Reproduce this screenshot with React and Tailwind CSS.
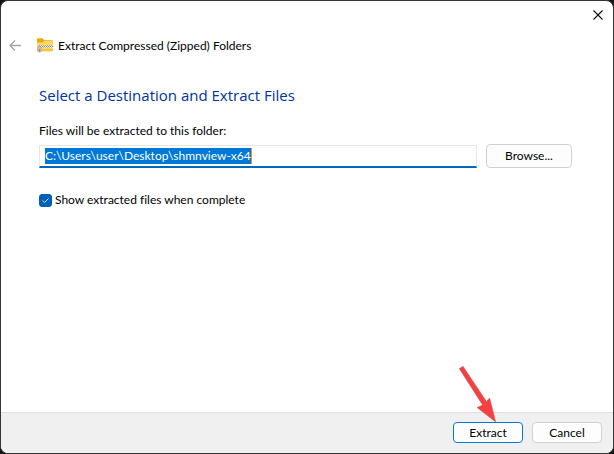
import { useState } from 'react'

const BTN = 'rounded border bg-[#fdfdfd] text-center leading-4 hover:bg-[#e5f1fb]'

function ZipFolderIcon() {
  return (
    <svg width="16" height="16" viewBox="0 0 16 16" aria-hidden="true">
      <path d="M0 1.500A1.200 1.200 0 0 1 1.200.3h4.300L7.300 2.200h7.500A1.200 1.200 0 0 1 16 3.400V8H0z" fill="#eba90d" />
      <path d="M0 4.500h5.500L7.100 3h7.700A1.200 1.200 0 0 1 16 4.200v7.900a1.200 1.200 0 0 1-1.200 1.200H1.200A1.200 1.200 0 0 1 0 12.100z" fill="#fdd861" />
      <path d="M0 11h16v1.100a1.200 1.200 0 0 1-1.200 1.200H1.200A1.200 1.200 0 0 1 0 12.100z" fill="#f6c544" />
      <path d="M1 7h15v3H1z" fill="#f6ebc8" />
      <path d="M1 8.500h15" stroke="#85857f" strokeDasharray="1 1" />
      <path d="M2 7.500h14" stroke="#a5a294" strokeDasharray="1 1" />
      <path d="M2 9.500h14" stroke="#c2b78f" strokeDasharray="1 1" />
      <path d="M1 8.500h3v4.700l-.8 1H1.800L1 13.200z" fill="#c5c8ca" stroke="#8b8f92" strokeWidth=".5" />
      <path d="M2 11.500h1v1.300H2z" fill="#5d6165" />
    </svg>
  )
}

export default function App() {
  const [path, setPath] = useState('C:\\Users\\user\\Desktop\\shmnview-x64')
  const [showFiles, setShowFiles] = useState(true)

  return (
    <div className="min-h-screen bg-[#141414] font-['Lato','Open_Sans',sans-serif] text-xs text-black [font-variant-ligatures:none]">
      <div className="flex min-h-screen flex-col overflow-hidden rounded-lg border border-[#363636] bg-white">
        {/* title bar */}
        <div className="flex justify-end pt-2 pr-[9px]">
          <button aria-label="Close" className="flex h-3 w-3 items-center justify-center">
            <svg width="12" height="12" viewBox="0 0 12 12" fill="none" stroke="#111" strokeWidth="1.100">
              <path d="M1.500 1.500l9 9M10.500 1.500l-9 9" />
            </svg>
          </button>
        </div>

        <header className="mt-[17px] flex h-4 items-center pl-2">
          <button aria-label="Back" className="mr-4 w-3" disabled>
            <svg width="12" height="12" viewBox="0 0 12 12" fill="none" stroke="#a5a5a5" strokeWidth="1.400">
              <path d="M12 5.500H1M6 .5l-5 5 5 5" />
            </svg>
          </button>
          <ZipFolderIcon />
          <span className="ml-[5px] leading-4">Extract Compressed (Zipped) Folders</span>
        </header>

        <main className="flex-1 pt-[31px] pr-[41px] pl-[38px]">
          <h1 className="font-['Open_Sans',sans-serif] text-[15px] leading-5 text-[#003399]">Select a Destination and Extract Files</h1>

          <label htmlFor="dest" className="mt-[18px] block leading-4">Files will be extracted to this folder:</label>
          <div className="mt-[5px] flex items-end gap-[9px]">
            <div className="flex h-[23px] flex-1 items-center border border-b-2 border-[#e6e6e6] border-b-[#0067c0] pl-[5px]">
              <input
                id="dest"
                value={path}
                onChange={(e) => setPath(e.target.value)}
                className="field-sizing-content h-4 max-w-full border-r border-[#ff8728] bg-[#0078d7] leading-4 text-white outline-none"
              />
            </div>
            <button className={`${BTN} h-6 w-[86px] border-[#d0d0d0]`}>Browse...</button>
          </div>

          <div className="mt-6 flex items-center gap-[3px]">
            <span className="grid h-[13px] w-[13px]">
              <input
                id="show"
                type="checkbox"
                checked={showFiles}
                onChange={() => setShowFiles(!showFiles)}
                className="peer col-start-1 row-start-1 h-[13px] w-[13px] appearance-none rounded-[3px] border border-[#888] checked:border-[#005fb8] checked:bg-[#005fb8]"
              />
              <svg className="pointer-events-none invisible col-start-1 row-start-1 peer-checked:visible" width="13" height="13" viewBox="0 0 13 13" fill="none" stroke="#d5e6f5">
                <path d="M3.500 6.500l2 2 4-4" />
              </svg>
            </span>
            <label htmlFor="show" className="leading-4">Show extracted files when complete</label>
          </div>
        </main>

        <footer className="relative flex justify-end gap-[9px] border-t border-[#dfdfdf] bg-[#f0f0f0] pt-[9px] pr-[11px] pb-[10px]">
          <button className={`${BTN} h-[21px] w-[70px] border-[#0078d4]`}>Extract</button>
          <button className={`${BTN} h-[21px] w-[70px] border-[#d0d0d0]`}>Cancel</button>
          {/* pointer to the Extract button */}
          <svg className="pointer-events-none absolute right-[114px] bottom-7" width="44" height="60" viewBox="0 0 44 60" aria-hidden="true">
            <path d="M4.200 3.600L8 1.200L31.500 36.500L34.700 33L40.700 57L22 42.500L27.500 40z" fill="#f44040" stroke="#b96363" strokeWidth=".5" />
          </svg>
        </footer>
      </div>
    </div>
  )
}
